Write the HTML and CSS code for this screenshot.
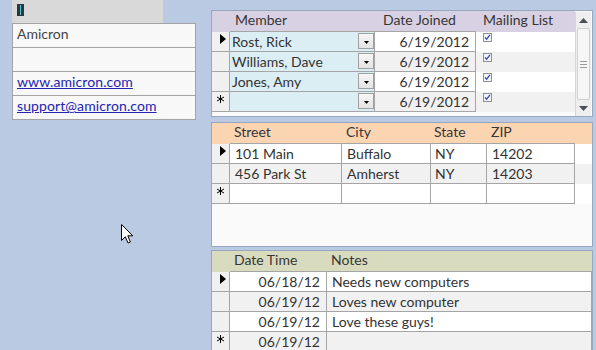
FILE: index.html
```html
<!DOCTYPE html>
<html>
<head>
<meta charset="utf-8">
<link rel="stylesheet" href="styles.css">
</head>
<body>
<div class="screen">
  <div class="left">
    <div class="caption">
      <svg class="caret" width="7" height="12" viewBox="0 0 7 12"><rect width="7" height="12" fill="#2e383c"/><rect x="3" y="1" width="1" height="10" fill="#4fc3d6"/></svg>
    </div>
    <div class="fields">
      <div class="field">Amicron</div>
      <div class="field"></div>
      <div class="field"><a href="#">www.amicron.com</a></div>
      <div class="field"><a href="#">support@amicron.com</a></div>
    </div>
  </div>

  <div class="right">
    <div class="panel members">
      <div class="sheet sheet-members">
        <div class="h"></div>
        <div class="h b h-member">Member</div>
        <div class="h b h-date">Date Joined</div>
        <div class="h h-mail">Mailing List</div>

        <div class="row">
          <div class="c sel"><svg width="6" height="10" viewBox="0 0 6 10"><path d="M0 0 L6 5 L0 10 Z" fill="#000"/></svg></div>
          <div class="c member"><span>Rost, Rick</span><span class="dd"><svg width="5" height="3" viewBox="0 0 5 3"><path d="M0 0 H5 L2.5 3 Z" fill="#000"/></svg></span></div>
          <div class="c date">6/19/2012</div>
          <div class="mail"><svg width="9" height="9" viewBox="0 0 9 9"><rect x="0.5" y="0.5" width="8" height="8" fill="#f4f6fa" stroke="#8e9096"/><path d="M2 4.3 L3.6 6.2 L7 1.8" fill="none" stroke="#3150a8" stroke-width="1.3"/></svg></div>
        </div>
        <div class="row alt">
          <div class="c sel"></div>
          <div class="c member"><span>Williams, Dave</span><span class="dd"><svg width="5" height="3" viewBox="0 0 5 3"><path d="M0 0 H5 L2.5 3 Z" fill="#000"/></svg></span></div>
          <div class="c date">6/19/2012</div>
          <div class="mail"><svg width="9" height="9" viewBox="0 0 9 9"><rect x="0.5" y="0.5" width="8" height="8" fill="#f4f6fa" stroke="#8e9096"/><path d="M2 4.3 L3.6 6.2 L7 1.8" fill="none" stroke="#3150a8" stroke-width="1.3"/></svg></div>
        </div>
        <div class="row">
          <div class="c sel"></div>
          <div class="c member"><span>Jones, Amy</span><span class="dd"><svg width="5" height="3" viewBox="0 0 5 3"><path d="M0 0 H5 L2.5 3 Z" fill="#000"/></svg></span></div>
          <div class="c date">6/19/2012</div>
          <div class="mail"><svg width="9" height="9" viewBox="0 0 9 9"><rect x="0.5" y="0.5" width="8" height="8" fill="#f4f6fa" stroke="#8e9096"/><path d="M2 4.3 L3.6 6.2 L7 1.8" fill="none" stroke="#3150a8" stroke-width="1.3"/></svg></div>
        </div>
        <div class="row alt">
          <div class="c sel new"><svg width="7" height="8" viewBox="0 0 7 8"><path d="M3.5 0 V8 M0 2 L7 6 M0 6 L7 2" stroke="#000" stroke-width="1"/></svg></div>
          <div class="c member"><span></span><span class="dd"><svg width="5" height="3" viewBox="0 0 5 3"><path d="M0 0 H5 L2.5 3 Z" fill="#000"/></svg></span></div>
          <div class="c date">6/19/2012</div>
          <div class="mail"><svg width="9" height="9" viewBox="0 0 9 9"><rect x="0.5" y="0.5" width="8" height="8" fill="#f4f6fa" stroke="#8e9096"/><path d="M2 4.3 L3.6 6.2 L7 1.8" fill="none" stroke="#3150a8" stroke-width="1.3"/></svg></div>
        </div>
      </div>
      <div class="scrollbar">
        <div class="sb-btn"><svg width="9" height="5" viewBox="0 0 9 5"><path d="M0 5 L4.5 0 L9 5 Z" fill="#4a4f57"/></svg></div>
        <div class="sb-thumb"><span class="grip"></span><span class="grip"></span><span class="grip"></span></div>
        <div class="sb-btn"><svg width="9" height="5" viewBox="0 0 9 5"><path d="M0 0 L4.5 5 L9 0 Z" fill="#4a4f57"/></svg></div>
      </div>
    </div>

    <div class="panel addresses">
      <div class="sheet sheet-addr">
        <div class="h"></div>
        <div class="h b">Street</div>
        <div class="h b">City</div>
        <div class="h b h-state">State</div>
        <div class="h b">ZIP</div>
        <div class="h"></div>

        <div class="row">
          <div class="c sel"><svg width="6" height="10" viewBox="0 0 6 10"><path d="M0 0 L6 5 L0 10 Z" fill="#000"/></svg></div>
          <div class="c txt">101 Main</div>
          <div class="c txt">Buffalo</div>
          <div class="c txt state">NY</div>
          <div class="c txt">14202</div>
          <div class="e"></div>
        </div>
        <div class="row alt">
          <div class="c sel"></div>
          <div class="c txt">456 Park St</div>
          <div class="c txt">Amherst</div>
          <div class="c txt state">NY</div>
          <div class="c txt">14203</div>
          <div class="e"></div>
        </div>
        <div class="row">
          <div class="c sel new"><svg width="7" height="8" viewBox="0 0 7 8"><path d="M3.5 0 V8 M0 2 L7 6 M0 6 L7 2" stroke="#000" stroke-width="1"/></svg></div>
          <div class="c txt"></div>
          <div class="c txt"></div>
          <div class="c txt"></div>
          <div class="c txt"></div>
          <div class="e"></div>
        </div>
      </div>
    </div>

    <div class="panel notes">
      <div class="sheet sheet-notes">
        <div class="h"></div>
        <div class="h b">Date Time</div>
        <div class="h b">Notes</div>

        <div class="row">
          <div class="c sel"><svg width="6" height="10" viewBox="0 0 6 10"><path d="M0 0 L6 5 L0 10 Z" fill="#000"/></svg></div>
          <div class="c date">06/18/12</div>
          <div class="c txt">Needs new computers</div>
        </div>
        <div class="row alt">
          <div class="c sel"></div>
          <div class="c date">06/19/12</div>
          <div class="c txt">Loves new computer</div>
        </div>
        <div class="row">
          <div class="c sel"></div>
          <div class="c date">06/19/12</div>
          <div class="c txt">Love these guys!</div>
        </div>
        <div class="row alt">
          <div class="c sel new"><svg width="7" height="8" viewBox="0 0 7 8"><path d="M3.5 0 V8 M0 2 L7 6 M0 6 L7 2" stroke="#000" stroke-width="1"/></svg></div>
          <div class="c date">06/19/12</div>
          <div class="c txt"></div>
        </div>
      </div>
    </div>
  </div>

  <svg class="pointer" width="13" height="20" viewBox="0 0 13 20"><path d="M0.5 0.5 L0.5 16.5 L4.3 12.8 L7 19 L9.4 18 L6.8 11.8 L11.8 11.8 Z" fill="#fff" stroke="#000" stroke-width="1" stroke-linejoin="round"/></svg>
</div>
</body>
</html>
```
FILE: styles.css
```css
* { box-sizing: border-box; }
html, body { margin: 0; padding: 0; }
body {
  background: #bacae2;
  font-family: Lato, "Open Sans", sans-serif;
  font-size: 14px;
  color: #333333;
  width: 596px;
  height: 350px;
  overflow: hidden;
}
.screen {
  position: relative;
  display: flex;
  align-items: flex-start;
  padding-left: 12px;
  height: 350px;
}

/* left form */
.left { width: 184px; flex: none; }
.caption {
  width: 152px;
  height: 23px;
  background: #d9d9d9;
  border-right: 1px solid #c8c8c8;
  padding: 4px 0 0 5px;
}
.caret { display: block; }
.fields {
  border: 1px solid #a3a3a3;
  background: #f8f8f8;
}
.field {
  height: 24px;
  border-top: 1px solid #a3a3a3;
  padding-left: 4px;
  line-height: 20px;
  color: #454545;
}
.field:first-child { border-top: 0; height: 23px; }
.field a { color: #2424b4; text-decoration: underline; letter-spacing: 0.1px; }

/* right column */
.right {
  margin-left: 15px;
  width: 382px;
  flex: none;
  display: flex;
  flex-direction: column;
  padding-top: 10px;
}
.panel {
  border: 1px solid #98a7c0;
  background: #fafafa;
}
.members { height: 107px; display: flex; margin-bottom: 5px; }
.addresses { height: 125px; margin-bottom: 3px; }
.notes { height: 110px; }

.sheet { display: grid; grid-auto-rows: 20px; grid-template-rows: 21px; }
.sheet-members { width: 363px; grid-template-columns: 18px 145px 101px 1fr; }
.sheet-addr { grid-template-columns: 18px 112px 89px 56px 88px 1fr; }
.sheet-notes { grid-template-columns: 18px 97px 1fr; }

.row { display: contents; }

.h {
  height: 21px;
  line-height: 18px;
  color: #363636;
  padding-left: 4px;
}
.h.b { border-bottom: 1px solid #a5a5a5; }
.sheet-members .h { background: #d8d1e3; }
.sheet-addr .h { background: #fbd4b2; }
.sheet-notes .h { background: #d9dbbe; }
.h-member { padding-left: 5px; }
.h-date { padding-left: 8px; }
.h-mail { padding-left: 7px; }
.h-state { padding-left: 3px; }

.c {
  height: 20px;
  line-height: 19px;
  border-right: 1px solid #a5a5a5;
  border-bottom: 1px solid #a5a5a5;
  background: #fff;
  white-space: nowrap;
  overflow: hidden;
}
.row.alt > .c, .row.alt > .mail, .row.alt > .e { background: #f1f1f1; }
.e { height: 20px; background: #fff; }

.c.sel { background: #f0f0f0; padding: 2px 0 0 8px; line-height: 0; }
.row.alt > .c.sel { background: #f0f0f0; }
.c.sel.new { padding: 3px 0 0 5px; }

.c.member {
  background: #dbeef4;
  display: flex;
  justify-content: space-between;
  align-items: flex-start;
  padding-left: 2px;
}
.row.alt > .c.member { background: #dbeef4; }
.dd {
  width: 16px;
  height: 16px;
  margin-top: 1px;
  border: 1px solid #a0a0a0;
  background: linear-gradient(#f7f7f7, #e3e3e3);
  display: flex;
  justify-content: center;
  align-items: flex-end;
  padding-bottom: 4px;
}
.dd svg { display: block; }

.c.date { text-align: right; padding-right: 6px; }
.c.txt { padding-left: 5px; }
.c.state { padding-left: 4px; }
.mail {
  height: 20px;
  background: #fff;
  padding: 1px 0 0 7px;
  line-height: 0;
}

/* scrollbar */
.scrollbar {
  width: 16px;
  margin: 1px 0 0 0;
  display: flex;
  flex-direction: column;
  background: #eeeeee;
  border-left: 1px solid #d6d6d6;
}
.sb-btn {
  height: 16px;
  display: flex;
  align-items: center;
  justify-content: center;
}
.sb-thumb {
  flex: 1;
  margin: 0 1px;
  border: 1px solid #cfcfcf;
  border-radius: 2px;
  background: #f6f6f6;
  display: flex;
  flex-direction: column;
  align-items: center;
  justify-content: center;
  gap: 2px;
}
.grip { width: 7px; height: 1px; background: #9a9a9a; }

.pointer { position: absolute; left: 121px; top: 224px; }
```
